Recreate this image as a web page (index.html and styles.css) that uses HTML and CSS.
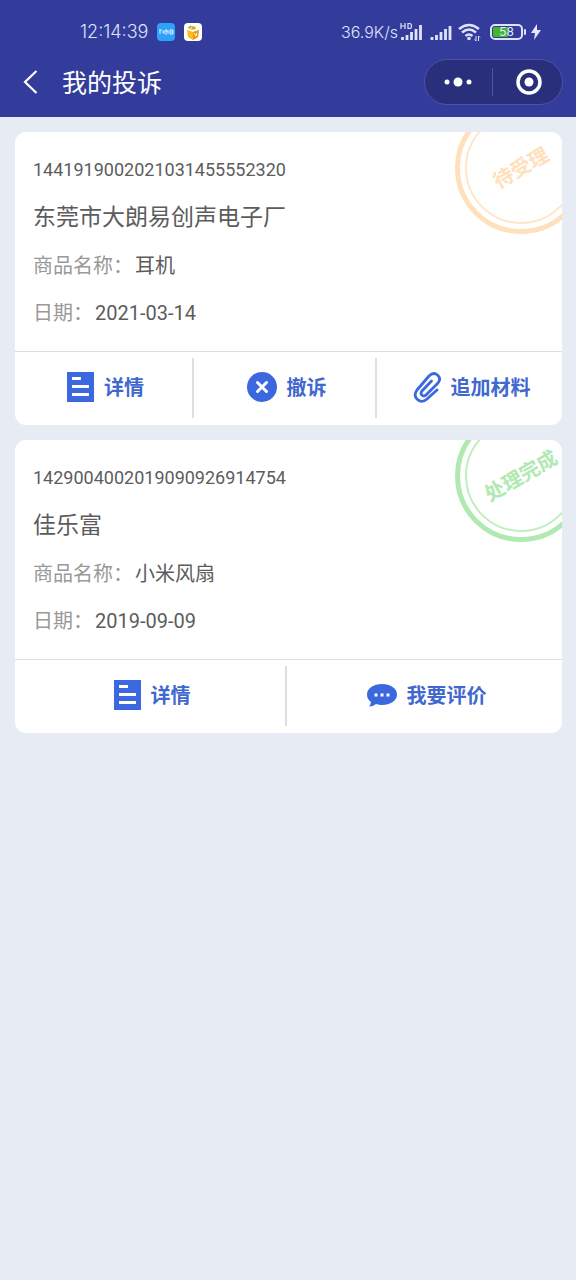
FILE: index.html
```html
<!DOCTYPE html>
<html lang="zh-CN">
<head>
<meta charset="utf-8">
<meta name="viewport" content="width=device-width, initial-scale=1">
<title>我的投诉</title>
<link rel="stylesheet" href="styles.css">
</head>
<body>
<header class="top">
  <div class="status">
    <div class="status-left">
      <span>12:14:39</span>
      <svg width="18" height="18" viewBox="0 0 18 18" aria-hidden="true">
        <rect width="18" height="18" rx="4" fill="#2ea2fb"/>
        <path d="M2 7h3M3 7v4M5 9h2M7 7v4M9 6v6M8 8h3M11 7v4M13 7h3v4h-3zM13 9h3" fill="none" stroke="#d9f0ff" stroke-width="1"/>
      </svg>
      <svg width="18" height="18" viewBox="0 0 18 18" aria-hidden="true">
        <rect width="18" height="18" rx="4" fill="#fffef8"/>
        <path d="M3 7l6 2 6-2-1 7-5 3-5-3z" fill="#f9bd22"/>
        <path d="M9 9l6-2-1 7-5 3z" fill="#ee9b16"/>
        <path d="M5 6q0-4 4-3 3 0 3 3l-3 1z" fill="#f5c944"/>
        <path d="M4 5l3-2M8 5h3" stroke="#4a9d9a" stroke-width="1"/>
        <path d="M10 10l2 3 1-3" fill="none" stroke="#fff" stroke-width="1"/>
      </svg>
    </div>
    <div class="status-right">
      <span class="speed">36.9K/s</span>
      <svg width="24" height="20" viewBox="0 0 24 20" aria-hidden="true" fill="none" stroke="#dfe2fb">
        <path d="M1 1v6M5 1v6M1 4h4M8 1.500v5h1.500q2 0 2-2.500t-2-2.500z" stroke-width="1.200"/>
        <path d="M2.500 15v3M7 13v5M11.500 10v8M16 7v11M20.500 3v15" stroke-width="2.800"/>
      </svg>
      <svg width="22" height="20" viewBox="0 0 22 20" aria-hidden="true">
        <path d="M2 15v3M6.500 13v5M11 10v8M15.500 7v11M20 4v14" stroke="#dfe2fb" stroke-width="2.800"/>
      </svg>
      <svg width="23" height="20" viewBox="0 0 23 20" aria-hidden="true" fill="none" stroke="#dfe2fb">
        <path d="M1 7q10-8 20 0M4 10.500q7-6 14 0M7.500 14q3.500-3 7 0" stroke-width="2.400"/>
        <circle cx="11" cy="16.500" r="1.800" fill="#dfe2fb" stroke="none"/>
        <path d="M18 14v5l-1.500-1.500M20.500 19v-5l1.500 1.500" stroke-width="1"/>
      </svg>
      <span class="battery"><span class="level">58</span></span>
      <svg width="10" height="18" viewBox="0 0 10 18" aria-hidden="true">
        <path d="M6 1L0 10h4l-1 7 7-10H6z" fill="#e4e7fc"/>
      </svg>
    </div>
  </div>
  <nav class="nav">
    <button class="back" aria-label="返回">
      <svg width="16" height="26" viewBox="0 0 16 26" aria-hidden="true"><path d="M14.500 2L3 13l11.500 11" fill="none" stroke="#fff" stroke-width="2.200"/></svg>
    </button>
    <h1 class="title">我的投诉</h1>
    <div class="capsule">
      <button class="capsule-btn" aria-label="更多">
        <svg width="28" height="10" viewBox="0 0 28 10" aria-hidden="true" fill="#fff"><circle cx="3" cy="5" r="2.500"/><circle cx="14" cy="5" r="4.500"/><circle cx="25" cy="5" r="2.500"/></svg>
      </button>
      <button class="capsule-btn" aria-label="关闭">
        <svg width="26" height="26" viewBox="0 0 26 26" aria-hidden="true"><circle cx="13" cy="13" r="11" fill="none" stroke="#fff" stroke-width="3.500"/><circle cx="13" cy="13" r="4.500" fill="#fff"/></svg>
      </button>
    </div>
  </nav>
</header>

<main class="list">
  <article class="card">
    <div class="stamp stamp-pending"><span class="stamp-text">待受理</span></div>
    <div class="info">
      <p class="number">1441919002021031455552320</p>
      <h2 class="company">东莞市大朗易创声电子厂</h2>
      <p class="row"><span class="label">商品名称：</span><span>耳机</span></p>
      <p class="row"><span class="label">日期：</span><span>2021-03-14</span></p>
    </div>
    <div class="actions actions-three">
      <button class="action">
        <svg width="27" height="30" viewBox="0 0 27 30" aria-hidden="true"><path d="M0 0h27v30H0z" fill="#3c68df"/><path d="M5 6.500h9M5 14.500h17M5 22.500h17" stroke="#fff" stroke-width="3"/></svg>
        <span>详情</span>
      </button>
      <button class="action">
        <svg width="30" height="30" viewBox="0 0 30 30" aria-hidden="true"><circle cx="15" cy="15" r="15" fill="#3c68df"/><path d="M10.500 10.500l9 9M19.500 10.500l-9 9" stroke="#fff" stroke-width="3" stroke-linecap="round"/></svg>
        <span>撤诉</span>
      </button>
      <button class="action">
        <svg width="28" height="32" viewBox="0 0 28 32" aria-hidden="true"><path d="M24 19L14 28q-5 4.500-9.500.5t-.5-9.500L16 5q4.500-4.500 8.500-1t.5 8L13.500 23.500q-2.500 2.500-4.500.8t.2-4.600L18.500 10" fill="none" stroke="#3c68df" stroke-width="2.800" stroke-linecap="round" stroke-linejoin="round"/></svg>
        <span>追加材料</span>
      </button>
    </div>
  </article>

  <article class="card">
    <div class="stamp stamp-done"><span class="stamp-text">处理完成</span></div>
    <div class="info">
      <p class="number">1429004002019090926914754</p>
      <h2 class="company">佳乐富</h2>
      <p class="row"><span class="label">商品名称：</span><span>小米风扇</span></p>
      <p class="row"><span class="label">日期：</span><span>2019-09-09</span></p>
    </div>
    <div class="actions actions-two">
      <button class="action">
        <svg width="27" height="30" viewBox="0 0 27 30" aria-hidden="true"><path d="M0 0h27v30H0z" fill="#3c68df"/><path d="M5 6.500h9M5 14.500h17M5 22.500h17" stroke="#fff" stroke-width="3"/></svg>
        <span>详情</span>
      </button>
      <button class="action">
        <svg width="30" height="24" viewBox="0 0 30 24" aria-hidden="true"><path d="M15 1C6.500 1 0 5.500 0 11.500q0 4.500 4 7.500-.5 3-2 4.500 4 0 7-2.500 3 1 6 1c8.500 0 15-4.500 15-10.500S23.500 1 15 1z" fill="#3c68df"/><path d="M7.500 10.500h3v3h-3zM13.500 10.500h3v3h-3zM19.500 10.500h3v3h-3z" fill="#fff"/></svg>
        <span>我要评价</span>
      </button>
    </div>
  </article>
</main>
</body>
</html>
```
FILE: styles.css
```css
* {
  box-sizing: border-box;
}

body {
  margin: 0;
  min-height: 100vh;
  background: #e7ebf4;
  color: #5c5c5c;
  font-family: Roboto, "Noto Sans CJK SC", sans-serif;
}

h1, h2, p {
  margin: 0;
  font-weight: 400;
}

button {
  border: 0;
  padding: 0;
  background: none;
  color: inherit;
  font: inherit;
  cursor: pointer;
}

svg {
  display: block;
  flex: none;
}

.top {
  background: #343c9b;
  color: #fff;
  padding-bottom: 12px;
}

.status {
  display: flex;
  justify-content: space-between;
  padding: 20px 35px 0 80px;
  height: 59px;
  color: #dfe2fb;
  font: 300 18px/24px Inter, sans-serif;
}

.status-left,
.status-right {
  display: flex;
  align-items: center;
  height: 24px;
}

.status-left {
  gap: 9px;
}

.status-right {
  gap: 6px;
}

.speed {
  margin-right: -4px;
  font-size: 16px;
}

.battery {
  display: flex;
  position: relative;
  width: 33px;
  height: 16px;
  margin: 0 2px 0 3px;
  border: 2px solid #dfe2fb;
  border-radius: 5px;
  padding: 1px;
}

.battery::after {
  content: "";
  position: absolute;
  right: -5px;
  top: 3px;
  width: 2px;
  height: 6px;
  border-radius: 1px;
  background: #dfe2fb;
}

.level {
  flex: 1;
  border-radius: 2px;
  background: linear-gradient(90deg, #42b72b 55%, transparent 55%);
  color: #e8ebfd;
  font: 400 12px/10px Inter, sans-serif;
  text-align: center;
}

.nav {
  display: flex;
  align-items: center;
  height: 46px;
  padding: 0 13px 0 22px;
}

.title {
  flex: 1;
  margin-left: 24px;
  padding-top: 3px;
  font-size: 25px;
  line-height: 36px;
}

.capsule {
  display: flex;
  align-items: center;
  width: 139px;
  height: 46px;
  border: 1px solid #4c54a8;
  border-radius: 23px;
  background: #292f7a;
}

.capsule-btn {
  display: flex;
  flex: 1;
  align-items: center;
  justify-content: center;
  height: 28px;
}

.capsule-btn + .capsule-btn {
  border-left: 1px solid #4c54a8;
  padding-left: 3px;
}

.list {
  display: flex;
  flex-direction: column;
  gap: 15px;
  padding: 15px 14px 15px 15px;
}

.card {
  position: relative;
  overflow: hidden;
  border-radius: 11px;
  background: #fff;
}

.info {
  padding: 26px 18px 22px;
}

.number {
  font-size: 18px;
  line-height: 24px;
}

.company {
  margin-top: 18px;
  font-size: 23px;
  line-height: 36px;
}

.row {
  display: flex;
  gap: 2px;
  margin-top: 15px;
  font-size: 20px;
  line-height: 32px;
}

.company + .row {
  margin-top: 14px;
}

.label {
  color: #999;
}

.actions {
  display: grid;
  border-top: 1px solid #dcdfe3;
  padding: 6px 0 7px;
}

.actions-three {
  grid-template-columns: 179fr 183fr 185fr;
}

.actions-two {
  grid-template-columns: 272fr 275fr;
}

.action {
  display: flex;
  align-items: center;
  justify-content: center;
  gap: 10px;
  height: 60px;
  padding-left: 4px;
  color: #4068ce;
  font-size: 20px;
  font-weight: 700;
  line-height: 30px;
}

.action svg {
  margin-bottom: 2px;
}

.action:not(:last-child) {
  border-right: 2px solid #dedfe2;
}

.stamp {
  display: flex;
  align-items: center;
  justify-content: center;
  position: absolute;
  top: -30px;
  right: -25px;
  width: 132px;
  height: 132px;
  border: 5px solid;
  border-radius: 50%;
}

.stamp::before {
  content: "";
  position: absolute;
  inset: 5px;
  border: 2px solid;
  border-radius: 50%;
  opacity: 0.8;
}

.stamp-text {
  font-size: 20px;
  font-weight: 700;
  line-height: 24px;
  white-space: nowrap;
  transform: rotate(-30deg);
}

.stamp-pending {
  color: #ffe0bd;
}

.stamp-done {
  color: #b0eab2;
}
```
